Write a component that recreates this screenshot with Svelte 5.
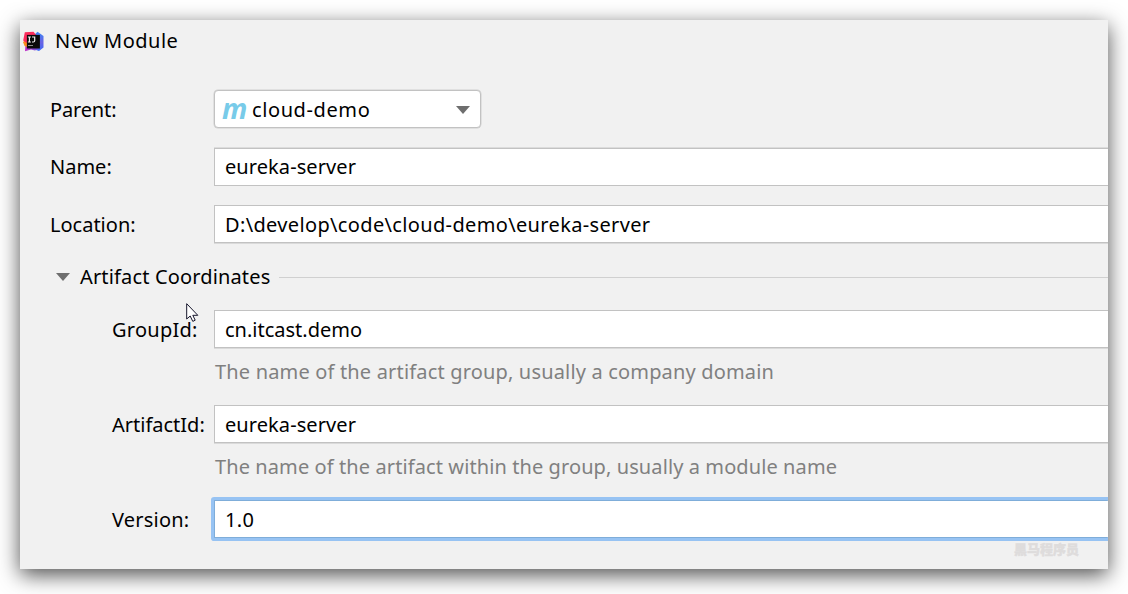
<script>
  const basics = [
    { label: 'Name:', value: 'eureka-server', track: 0.08, kind: 'name' },
    { label: 'Location:', value: 'D:\\develop\\code\\cloud-demo\\eureka-server', track: 0.35, kind: 'location' }
  ];
  const coords = [
    { label: 'GroupId:', value: 'cn.itcast.demo', labelTrack: 0.25, track: 0, hint: 'The name of the artifact group, usually a company domain', hintTrack: 0.17 },
    { label: 'ArtifactId:', value: 'eureka-server', labelTrack: 0, track: 0.08, hint: 'The name of the artifact within the group, usually a module name', hintTrack: 0.095 }
  ];
</script>

<div class="window">
  <header>
    <svg class="logo" width="21" height="21" viewBox="0 0 21 21">
      <defs>
        <linearGradient id="blue" x1="0" y1="0" x2="0" y2="1">
          <stop offset="0" stop-color="#3b86f5" /><stop offset=".55" stop-color="#6a62e4" /><stop offset="1" stop-color="#3c6cf5" />
        </linearGradient>
        <linearGradient id="violet" x1="0" y1="0" x2="1" y2="0">
          <stop offset="0" stop-color="#c32fc8" /><stop offset="1" stop-color="#6a55e0" />
        </linearGradient>
      </defs>
      <path d="M10 5 14.5 .8 20.5 5V16.5L16 20 10 18Z" fill="url(#blue)" />
      <path d="M2.5 13H12L16 17.5 12 19.4 8 18.4 2 20.2Z" fill="url(#violet)" />
      <path d="M0 11 4 8V16L1.6 15Z" fill="#fc8a1d" />
      <path d="M1.8 1.3 10.5 .8 14 5 5 9 3.5 12 .2 9.5Z" fill="#fb2c5c" />
      <rect x="3.9" y="3.9" width="13" height="13.6" fill="#0a0a0a" />
      <path d="M4.9 6H7.9M6.4 6V11M4.9 11H7.9M9 6H11.7V9.8Q11.6 11 10.4 11H9" stroke="#eee" fill="none" stroke-width="1.2" />
      <path d="M5 14.5H10" stroke="#888" stroke-width="1" />
    </svg>
    <span>New Module</span>
  </header>

  <div class="row parent">
    <span class="label">Parent:</span>
    <div class="select">
      <span class="maven">m</span>
      <span class="choice">cloud-demo</span>
      <svg width="14" height="8" viewBox="0 0 14 8"><path d="M0 0H14L7 8Z" fill="#6e6e6e" /></svg>
    </div>
  </div>
  {#each basics as f}
    <div class="row {f.kind}">
      <span class="label">{f.label}</span>
      <div class="field"><span style:letter-spacing="{f.track}px">{f.value}</span></div>
    </div>
  {/each}

  <div class="section">
    <svg width="14" height="8" viewBox="0 0 14 8"><path d="M0 0H14L7 8Z" fill="#6e6e6e" /></svg>
    <span>Artifact Coordinates</span>
    <i></i>
  </div>

  {#each coords as f}
    <div class="row sub">
      <span class="label" style:letter-spacing="{f.labelTrack}px">{f.label}</span>
      <div class="field"><span style:letter-spacing="{f.track}px">{f.value}</span></div>
    </div>
    <p style:letter-spacing="{f.hintTrack}px">{f.hint}</p>
  {/each}
  <div class="row sub version">
    <span class="label">Version:</span>
    <div class="field focus"><span>1.0</span></div>
  </div>

  <svg class="cursor" width="13" height="20" viewBox="0 0 13 20">
    <path d="M.7 .7V16L4.2 13 6.8 18.4 9.2 17.2 6.8 12.3H11.8Z" fill="#fff" stroke="#15152b" />
  </svg>
  <span class="watermark">黑马程序员</span>
</div>

<style>
  :global(body) { margin: 0; background: #fff; overflow: hidden; }
  :global(#app) { display: flow-root; height: 594px; }
  .window {
    position: relative; box-sizing: border-box; width: 1088px; height: 549px; margin: 20px;
    background: #f1f1f1; color: #000; font: 20px/28px "Noto Sans", sans-serif;
    box-shadow: 0 6px 20px rgba(0, 0, 0, .69); white-space: nowrap;
  }
  header { display: flex; align-items: center; height: 42px; padding-left: 3px; gap: 11px; letter-spacing: .5px; }
  .row { display: flex; align-items: center; height: 38px; padding-left: 30px; }
  .row span { padding-top: 2px; }
  .row.name span { padding-top: 0; }
  .parent { margin: 28px 0 20px; }
  .parent .label { letter-spacing: -.15px; }
  .name { margin-bottom: 19px; }
  .location { margin-bottom: 20px; }
  .label { width: 164px; flex: none; }
  .sub { padding-left: 92px; }
  .sub .label { width: 102px; }
  .field, .select { box-sizing: border-box; display: flex; align-items: center; height: 38px; background: #fff; border: 1px solid #c2c2c2; }
  .field { flex: 1; border-right: 0; padding-left: 10px; box-shadow: 0 1px 0 #dadada; }
  .name .field { box-shadow: 0 -1px 0 #dcdcdc; }
  .select { width: 267px; border-radius: 4px; padding: 0 10.5px 0 7px; box-shadow: 0 0 0 .5px #d0d0d0; }
  .select svg { margin-top: 2px; }
  .row .maven { width: 30px; padding: 0; margin-top: -3px; color: #78cbe9; font: italic bold 28px/28px "Open Sans", sans-serif; }
  .choice { flex: 1; letter-spacing: .6px; }
  .section { display: flex; align-items: center; height: 28px; margin: 0 0 19px; padding-left: 35.5px; }
  .section span { margin: 0 9px 0 10.5px; letter-spacing: .15px; }
  .section i { height: 1px; flex: 1; margin-top: 1px; background: #d0d0d0; }
  p { margin: 10px 0 18px 195px; height: 29px; color: #808080; }
  .version .label { letter-spacing: .2px; }
  .field.focus { border-color: #7fadd9; box-shadow: 0 0 0 3px #97c3f3; border-radius: 1px; clip-path: inset(-4px 0 -4px -4px); letter-spacing: .3px; }
  .cursor { position: absolute; left: 166px; top: 283px; }
  .watermark { position: absolute; left: 994px; top: 520.5px; font: 900 13px/16px "Noto Sans CJK SC", sans-serif; color: #dedcdc; -webkit-text-stroke: .4px #dedcdc; }
</style>
